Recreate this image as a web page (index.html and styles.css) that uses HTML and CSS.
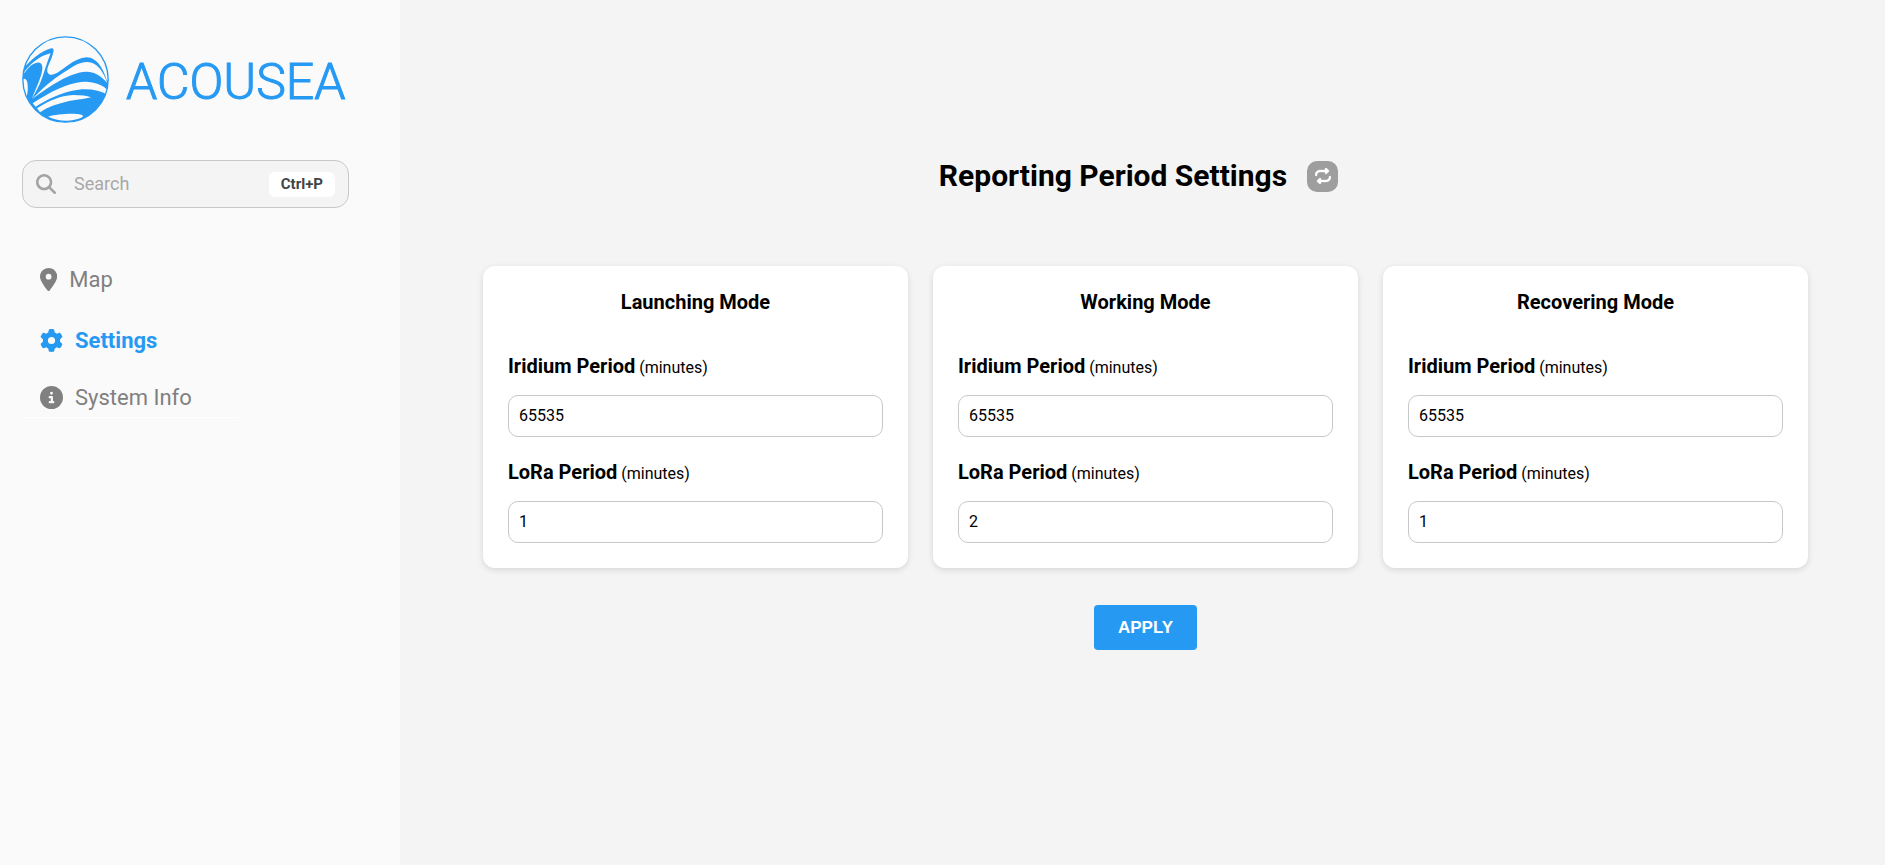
FILE: index.html
```html
<!DOCTYPE html>
<html lang="en">
<head>
<meta charset="utf-8">
<title>Acousea - Reporting Period Settings</title>
<link rel="stylesheet" href="styles.css">
</head>
<body>
<div class="app">
  <aside class="sidebar">
    <a class="brand" href="#">
      <svg class="brand-mark" viewBox="36 31 261 261" aria-hidden="true">
        <clipPath id="disc"><circle cx="166.500" cy="161.500" r="129"/></clipPath>
        <circle cx="166.500" cy="161.500" r="128" fill="#2699f3"/>
        <g clip-path="url(#disc)" fill="#fafafa">
          <path d="M30 140C56 108 92 76 124 68Q133 66 130 78C126 102 109 124 112 138Q116 151 132 146C162 134 190 97 230 95C262 96 280 130 291 165L300 160V20H30Z"/>
          <path d="M38 145C60 115 88 90 122 83C116 97 106 128 96 158C88 182 76 200 66 220C78 185 98 150 97 125Q96 108 80 111C62 116 50 130 38 150Z"/>
          <path d="M36 162C46 155 52 162 53 178C54 192 53 204 50 211L30 200Z"/>
          <path d="M67 220C95 190 130 160 162 140C190 122 205 110 232 109C262 110 280 138 292 172C270 147 250 137 228 138C180 140 120 180 67 220Z"/>
          <path d="M68 233C105 208 150 182 200 171C240 163 275 174 296 196L294 208C270 194 240 188 205 192C155 198 110 222 77 243Z"/>
          <path d="M81 248C115 226 150 210 190 208Q225 208 243 215C215 222 185 223 155 232C125 240 108 248 90 260Z"/>
          <path d="M114 273C142 265 190 262 214 267Q226 271 210 278C180 289 145 287 114 273Z"/>
        </g>
        <circle cx="166.500" cy="161.500" r="128" fill="none" stroke="#2699f3" stroke-width="4"/>
      </svg>
      <span class="brand-name">ACOUSEA</span>
    </a>
    <label class="search">
      <svg class="search-icon" viewBox="0 0 512 512" aria-hidden="true"><path d="M416 208c0 45.900-14.900 88.300-40 122.700L502.600 457.400c12.500 12.500 12.500 32.800 0 45.300s-32.800 12.500-45.300 0L330.700 376c-34.400 25.200-76.800 40-122.700 40C93.100 416 0 322.900 0 208S93.100 0 208 0S416 93.100 416 208zM208 352a144 144 0 1 0 0-288 144 144 0 1 0 0 288z"/></svg>
      <input class="search-input" type="text" placeholder="Search" aria-label="Search">
      <kbd class="shortcut">Ctrl+P</kbd>
    </label>
    <nav class="nav">
      <a class="nav-link nav-link-map" href="#">
        <svg class="nav-icon" viewBox="0 0 384 512" aria-hidden="true"><path d="M215.700 499.200C267 435 384 279.400 384 192C384 86 298 0 192 0S0 86 0 192c0 87.400 117 243 168.300 307.200c12.300 15.300 35.100 15.300 47.400 0zM192 128a64 64 0 1 1 0 128 64 64 0 1 1 0-128z"/></svg>
        <span>Map</span>
      </a>
      <a class="nav-link nav-link-active" href="#" aria-current="page">
        <svg class="nav-icon" viewBox="0 0 512 512" aria-hidden="true"><path d="M495.900 166.600c3.200 8.700 .5 18.400-6.400 24.600l-43.300 39.400c1.100 8.300 1.700 16.800 1.700 25.400s-.6 17.100-1.700 25.400l43.300 39.400c6.900 6.200 9.600 15.900 6.400 24.600c-4.400 11.900-9.700 23.300-15.800 34.300l-4.700 8.100c-6.600 11-14 21.400-22.100 31.200c-5.900 7.200-15.700 9.600-24.500 6.800l-55.700-17.700c-13.400 10.300-28.200 18.900-44 25.400l-12.500 57.100c-2 9.100-9 16.300-18.200 17.800c-13.800 2.300-28 3.500-42.500 3.500s-28.700-1.200-42.500-3.500c-9.200-1.500-16.200-8.700-18.200-17.800l-12.500-57.100c-15.800-6.500-30.600-15.100-44-25.400L83.100 425.900c-8.800 2.800-18.600 .3-24.500-6.800c-8.100-9.800-15.500-20.200-22.100-31.200l-4.700-8.100c-6.100-11-11.400-22.400-15.800-34.300c-3.200-8.700-.5-18.400 6.400-24.600l43.300-39.400C64.600 273.100 64 264.600 64 256s.6-17.100 1.700-25.400L22.400 191.200c-6.900-6.200-9.600-15.900-6.400-24.600c4.400-11.900 9.700-23.300 15.800-34.300l4.700-8.100c6.600-11 14-21.400 22.100-31.200c5.900-7.200 15.700-9.600 24.500-6.800l55.700 17.700c13.400-10.300 28.200-18.900 44-25.400l12.500-57.100c2-9.100 9-16.300 18.200-17.800C227.300 1.200 241.500 0 256 0s28.700 1.200 42.500 3.500c9.200 1.500 16.200 8.700 18.200 17.800l12.500 57.100c15.800 6.500 30.600 15.100 44 25.400l55.700-17.700c8.800-2.800 18.600-.3 24.500 6.800c8.100 9.800 15.500 20.200 22.100 31.200l4.700 8.100c6.100 11 11.400 22.400 15.800 34.300zM256 336a80 80 0 1 0 0-160 80 80 0 1 0 0 160z"/></svg>
        <span>Settings</span>
      </a>
      <a class="nav-link" href="#">
        <svg class="nav-icon" viewBox="0 0 512 512" aria-hidden="true"><path d="M256 512A256 256 0 1 0 256 0a256 256 0 1 0 0 512zM216 336h24V272H216c-13.300 0-24-10.700-24-24s10.700-24 24-24h48c13.300 0 24 10.700 24 24v88h8c13.300 0 24 10.700 24 24s-10.700 24-24 24H216c-13.300 0-24-10.700-24-24s10.700-24 24-24zm40-208a32 32 0 1 1 0 64 32 32 0 1 1 0-64z"/></svg>
        <span>System Info</span>
      </a>
    </nav>
  </aside>
  <main class="main">
    <header class="heading">
      <h1 class="title">Reporting Period Settings</h1>
      <button class="refresh" type="button" aria-label="Refresh">
        <svg class="refresh-icon" viewBox="0 0 512 512" aria-hidden="true"><path d="M0 224c0 17.700 14.300 32 32 32s32-14.300 32-32c0-53 43-96 96-96H320v32c0 12.900 7.800 24.600 19.800 29.600s25.700 2.200 34.900-6.900l64-64c12.500-12.500 12.500-32.800 0-45.300l-64-64c-9.200-9.200-22.900-11.900-34.900-6.900S320 19.100 320 32V64H160C71.600 64 0 135.600 0 224zm512 64c0-17.700-14.300-32-32-32s-32 14.300-32 32c0 53-43 96-96 96H192V352c0-12.900-7.800-24.600-19.800-29.600s-25.700-2.200-34.900 6.900l-64 64c-12.500 12.500-12.500 32.800 0 45.300l64 64c9.200 9.200 22.900 11.900 34.900 6.900s19.800-16.600 19.800-29.600V448H352c88.400 0 160-71.600 160-160z"/></svg>
      </button>
    </header>
    <form class="form">
      <div class="cards">
        <section class="card">
          <h2 class="card-title">Launching Mode</h2>
          <label class="label" for="l-iridium"><strong class="label-name">Iridium Period</strong> (minutes)</label>
          <input class="field" id="l-iridium" type="text" inputmode="numeric" value="65535">
          <label class="label" for="l-lora"><strong class="label-name">LoRa Period</strong> (minutes)</label>
          <input class="field" id="l-lora" type="text" inputmode="numeric" value="1">
        </section>
        <section class="card">
          <h2 class="card-title">Working Mode</h2>
          <label class="label" for="w-iridium"><strong class="label-name">Iridium Period</strong> (minutes)</label>
          <input class="field" id="w-iridium" type="text" inputmode="numeric" value="65535">
          <label class="label" for="w-lora"><strong class="label-name">LoRa Period</strong> (minutes)</label>
          <input class="field" id="w-lora" type="text" inputmode="numeric" value="2">
        </section>
        <section class="card">
          <h2 class="card-title">Recovering Mode</h2>
          <label class="label" for="r-iridium"><strong class="label-name">Iridium Period</strong> (minutes)</label>
          <input class="field" id="r-iridium" type="text" inputmode="numeric" value="65535">
          <label class="label" for="r-lora"><strong class="label-name">LoRa Period</strong> (minutes)</label>
          <input class="field" id="r-lora" type="text" inputmode="numeric" value="1">
        </section>
      </div>
      <button class="apply" type="button">APPLY</button>
    </form>
  </main>
</div>
</body>
</html>
```
FILE: styles.css
```css
* { box-sizing: border-box; }

body {
  margin: 0;
  background: #f4f4f4;
  color: #000;
  font-family: Roboto, "Liberation Sans", sans-serif;
}

.app {
  display: flex;
  min-height: 100vh;
}

.sidebar {
  flex: 0 0 400px;
  padding: 36px 22px;
  background: #fafafa;
}

.brand {
  display: flex;
  align-items: center;
  gap: 17px;
  color: #2699f3;
  text-decoration: none;
}

.brand-mark {
  width: 87px;
  height: 87px;
}

.brand-name {
  padding-top: 4px;
  font-size: 50px;
  font-weight: 300;
  line-height: 60px;
  -webkit-text-stroke: 1px #2699f3;
}

.search {
  display: flex;
  align-items: center;
  width: 327px;
  height: 48px;
  margin-top: 37px;
  padding: 0 13px;
  border: 1px solid #c8c8c8;
  border-radius: 14px;
  background: #f4f4f4;
}

.search-icon {
  flex: none;
  width: 20px;
  height: 20px;
  fill: #a3a3a3;
}

.search-input {
  flex: 1;
  min-width: 0;
  margin-left: 18px;
  padding: 0;
  border: 0;
  background: none;
  font: 18px/24px Roboto, sans-serif;
}

.search-input::placeholder { color: #a8a8a8; }

.shortcut {
  padding: 0 12px;
  border-radius: 6px;
  background: #fff;
  color: #444;
  font: 700 15px/25px Roboto, sans-serif;
}

.nav {
  display: flex;
  flex-direction: column;
  gap: 28px;
  width: 213px;
  margin: 57px 0 0 3px;
  padding: 0 0 5px 15px;
  border-bottom: 1px solid #fff;
}

.nav-link {
  display: flex;
  align-items: center;
  gap: 12px;
  color: #808080;
  font-size: 22px;
  line-height: 29px;
  text-decoration: none;
}

.nav-link-map { margin-bottom: 4px; }

.nav-link-active {
  color: #2699f3;
  font-weight: 700;
}

.nav-icon {
  height: 23px;
  fill: currentColor;
}

.main {
  flex: 1;
  min-width: 0;
  padding: 158px 77px 40px 83px;
}

.heading {
  display: flex;
  align-items: center;
  justify-content: center;
  gap: 20px;
  padding-right: 14px;
}

.title {
  margin: 0;
  font-size: 30px;
  font-weight: 700;
  line-height: 36px;
}

.refresh {
  display: grid;
  place-items: center;
  width: 31px;
  height: 31px;
  padding: 0;
  border: 0;
  border-radius: 10px;
  background: #9e9e9e;
}

.refresh-icon {
  width: 16px;
  height: 16px;
  fill: #fff;
  stroke: #fff;
  stroke-width: 12px;
}

.form {
  display: flex;
  flex-direction: column;
  align-items: center;
  gap: 37px;
  margin-top: 72px;
}

.cards {
  display: grid;
  grid-template-columns: repeat(3, 1fr);
  gap: 25px;
  width: 100%;
}

.card {
  display: flex;
  flex-direction: column;
  padding: 24px 25px 25px;
  border-radius: 12px;
  background: #fff;
  box-shadow: 0 2px 6px rgba(0, 0, 0, 0.12);
}

.card-title {
  margin: 0 0 17px;
  font-size: 20px;
  font-weight: 700;
  line-height: 24px;
  text-align: center;
}

.label {
  padding: 25px 0 15px;
  font-size: 16px;
  line-height: 24px;
}

.label-name {
  font-size: 20px;
  font-weight: 700;
  line-height: 20px;
}

.field {
  width: 100%;
  height: 42px;
  padding: 0 10px 2px;
  border: 1px solid #c8c8c8;
  border-radius: 10px;
  background: #fff;
  color: #000;
  font: 16px/20px Roboto, sans-serif;
}

.apply {
  padding: 12px 24px;
  border: 0;
  border-radius: 4px;
  background: #2699f3;
  color: #fff;
  font: 700 17px/21px "Liberation Sans", sans-serif;
}
```
